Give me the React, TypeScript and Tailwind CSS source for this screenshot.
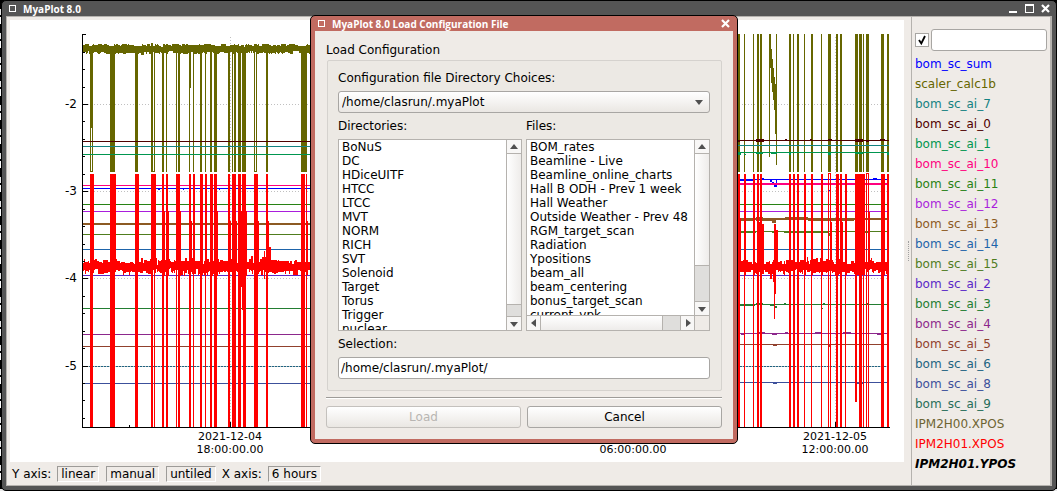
import React from "react";

const legend: [string, string][] = [
  ["bom_sc_sum", "text-[#0000ff]"],
  ["scaler_calc1b", "text-[#666600]"],
  ["bom_sc_ai_7", "text-[#148282]"],
  ["bom_sc_ai_0", "text-[#500000]"],
  ["bom_sc_ai_1", "text-[#009650]"],
  ["bom_sc_ai_10", "text-[#ff007f]"],
  ["bom_sc_ai_11", "text-[#288214]"],
  ["bom_sc_ai_12", "text-[#aa1edc]"],
  ["bom_sc_ai_13", "text-[#8c5a23]"],
  ["bom_sc_ai_14", "text-[#1e64aa]"],
  ["bom_sc_ai_15", "text-[#507d1e]"],
  ["bom_sc_ai_2", "text-[#5a28c8]"],
  ["bom_sc_ai_3", "text-[#237d32]"],
  ["bom_sc_ai_4", "text-[#8c288c]"],
  ["bom_sc_ai_5", "text-[#91412d]"],
  ["bom_sc_ai_6", "text-[#1e6482]"],
  ["bom_sc_ai_8", "text-[#3c509b]"],
  ["bom_sc_ai_9", "text-[#286e5a]"],
  ["IPM2H00.XPOS", "text-[#6e6432]"],
  ["IPM2H01.XPOS", "text-[#ff0000]"],
];

const directories = ["BoNuS", "DC", "HDiceUITF", "HTCC", "LTCC", "MVT", "NORM", "RICH", "SVT", "Solenoid", "Target", "Torus", "Trigger", "nuclear"];
const files = ["BOM_rates", "Beamline - Live", "Beamline_online_charts", "Hall B ODH - Prev 1 week", "Hall Weather", "Outside Weather - Prev 48", "RGM_target_scan", "Radiation", "Ypositions", "beam_all", "beam_centering", "bonus_target_scan", "current_vpk"];

// Each bar is [x, y, width, height] in chart units.
type Bar = [number, number, number, number];

const span = (pairs: [number, number][], y: number, bottom: number): Bar[] =>
  pairs.map(([x, w]) => [x, y, w, bottom - y]);

const toPath = (bars: Bar[]) => bars.map(([x, y, w, h]) => `M${x} ${y}h${w}v${h}h${-w}z`).join("");

function noise(from: number, to: number, top: number, bottom: number, jitter: number, seed: number): Bar[] {
  let s = seed;
  const next = () => {
    s = (s * 1103515245 + 12345) % 2147483648;
    return s / 2147483648;
  };
  const out: Bar[] = [];
  let a = 0;
  let b = 0;
  for (let x = from; x < to; x++) {
    if (next() > 0.45) a = Math.round((next() + next() - 1) * jitter);
    if (next() > 0.3) b = Math.round((next() + next() - 1) * jitter);
    out.push([x, top + a, 1, bottom + b - top - a]);
  }
  return out;
}

const oliveBars: Bar[] = [
  ...noise(83, 312, 45, 53, 2, 7),
  [90, 50, 3, 78],
  ...span([[90, 1], [92, 1], [110, 5], [135, 3], [151, 2], [154, 1], [162, 2], [166, 1], [176, 1], [178, 2], [189, 1], [193, 1], [200, 2], [205, 1], [210, 2], [214, 3], [228, 2], [232, 1], [234, 2], [238, 3], [242, 4], [254, 1], [256, 1], [266, 2], [301, 6]], 50, 172),
  [190, 50, 1, 38],
  [90, 171, 3, 1],
  [151, 171, 4, 1],
  [254, 171, 3, 1],
  ...span([[738, 2], [744, 1], [753, 1], [757, 2], [760, 2], [789, 2], [793, 1], [797, 2], [804, 1], [811, 2], [821, 1], [828, 3], [836, 2], [840, 2], [855, 3], [859, 3], [863, 1], [866, 3], [881, 3], [887, 2]], 34, 172),
  [769, 34, 1, 123],
  [770, 34, 1, 34],
  [771, 49, 1, 34],
  [772, 59, 1, 33],
  [773, 68, 1, 32],
  [774, 77, 1, 33],
  [775, 84, 1, 50],
  [776, 34, 1, 131],
];

const redBars: Bar[] = [
  ...noise(83, 312, 261, 272, 4, 19),
  ...noise(738, 889, 261, 272, 4, 31),
  ...span([[90, 3], [110, 5], [135, 3], [151, 2], [154, 1], [162, 2], [166, 2], [176, 1], [178, 2], [189, 2], [193, 1], [200, 2], [205, 1], [210, 2], [214, 3], [228, 2], [232, 4], [238, 3], [243, 3], [254, 4], [266, 2], [301, 4], [306, 1]], 174, 427),
  ...span([[90, 4], [110, 6], [135, 4], [152, 4], [176, 4], [193, 2], [200, 3], [205, 2], [210, 3], [242, 4]], 174, 270),
  ...span([[162, 3], [166, 3], [178, 3], [210, 3], [215, 3], [238, 9]], 211, 276),
  ...span([[190, 2], [229, 2], [234, 3], [255, 4], [267, 2], [306, 2]], 221, 270),
  [241, 260, 2, 27],
  [242, 270, 2, 40],
  [269, 247, 2, 20],
  [264, 251, 1, 28],
  [251, 256, 2, 10],
  [262, 257, 4, 10],
  ...span([[738, 2], [744, 1], [753, 1], [757, 2], [760, 2], [789, 2], [793, 2], [797, 2], [804, 1], [811, 1], [821, 1], [828, 1], [830, 1], [836, 2], [840, 2], [859, 3], [863, 1], [866, 1], [868, 1], [881, 3], [887, 1], [888, 1]], 174, 427),
  ...span([[744, 2], [753, 2], [793, 2], [804, 2], [811, 2], [821, 2], [836, 3], [845, 2], [855, 7], [862, 3], [881, 4], [887, 2]], 174, 275),
  [845, 174, 1, 253],
  [828, 173, 3, 1],
  [866, 173, 3, 1],
  [855, 174, 2, 228],
  [738, 218, 3, 50],
  [758, 222, 4, 48],
  [760, 224, 4, 46],
  [774, 224, 2, 70],
  [775, 230, 3, 40],
  [774, 270, 1, 49],
  [770, 265, 2, 14],
  [773, 265, 1, 17],
  [840, 222, 3, 48],
  [831, 222, 1, 48],
  [861, 210, 4, 58],
  [868, 212, 2, 56],
];

// [colour, y on the left side, y on the right side, thickness]
const traces: [string, number, number, number][] = [
  ["#500000", 141, 140, 1],
  ["#148282", 146, 145, 1],
  ["#009650", 154, 152, 1],
  ["#ff007f", 185, 183, 1],
  ["#0000ff", 188, 179, 1],
  ["#288214", 204, 204, 1],
  ["#aa1edc", 211, 211, 1],
  ["#8c5a23", 223, 218, 2],
  ["#507d1e", 234, 231, 1],
  ["#1e64aa", 249, 249, 1],
  ["#5a28c8", 275, 275, 1],
  ["#237d32", 308, 304, 1],
  ["#8c288c", 334, 333, 1],
  ["#91412d", 346, 344, 1],
  ["#1e6482", 366, 366, 1],
  ["#3c509b", 383, 382, 1],
];

const detail: [string, Bar[]][] = [
  ["#500000", [[738, 141, 2, 1], [756, 139, 8, 3], [785, 139, 2, 1], [810, 139, 2, 1], [828, 139, 4, 1], [855, 139, 8, 3], [866, 141, 3, 1], [880, 139, 5, 2]]],
  ["#009650", [[738, 153, 3, 2], [744, 154, 2, 1], [756, 152, 7, 2], [771, 153, 6, 1], [789, 153, 2, 2], [828, 153, 3, 2], [855, 153, 8, 1], [887, 153, 2, 2]]],
  ["#0000ff", [[740, 180, 14, 1], [760, 178, 4, 1], [770, 180, 2, 2], [772, 182, 2, 2], [774, 184, 3, 3], [776, 180, 1, 6], [873, 178, 4, 1], [152, 189, 3, 1], [158, 189, 2, 1], [183, 189, 1, 1], [219, 189, 1, 1], [829, 190, 1, 1]]],
  ["#ff007f", [[738, 183, 151, 2]]],
  ["#8c5a23", [[741, 218, 14, 3], [756, 217, 7, 4], [763, 219, 13, 2], [772, 220, 4, 3], [785, 217, 23, 3], [808, 218, 46, 3], [855, 217, 10, 4], [876, 219, 10, 1]]],
  ["#507d1e", [[740, 232, 16, 1], [772, 232, 4, 1], [784, 232, 44, 1], [855, 232, 14, 1], [829, 233, 2, 3]]],
  ["#237d32", [[740, 304, 15, 2], [756, 303, 7, 1], [770, 305, 4, 1], [774, 306, 3, 2], [784, 303, 2, 1], [823, 303, 2, 1], [866, 303, 2, 1], [793, 308, 2, 1], [821, 308, 2, 1]]],
  ["#8c288c", [[741, 334, 4, 1], [759, 332, 6, 1], [772, 334, 5, 1], [785, 332, 3, 1], [815, 332, 6, 1], [843, 332, 8, 1], [877, 333, 5, 2]]],
  ["#3c509b", [[773, 383, 4, 1], [793, 383, 2, 1], [855, 383, 8, 1]]],
  ["#91412d", [[773, 345, 4, 1], [828, 345, 2, 2]]],
];

const minorTicks = [52, 69, 87, 121, 139, 156, 174, 209, 226, 244, 261, 296, 313, 331, 348, 383, 400, 418];

function Chart() {
  return (
    <svg viewBox="10 20 894 442" className="block w-full bg-white" shapeRendering="crispEdges" role="img" aria-label="Signal history">
      <path d="M88 104.5H889M88 191.5H889M88 278.5H889M230.5 37V427M632.5 37V427M835.5 37V427" stroke="#c0c0c0" strokeDasharray="1 2" fill="none" />
      <path d={toPath(oliveBars)} fill="#666600" />
      {traces.map(([c, l, r, h]) => (
        <path key={c} fill={c} d={toPath([[83, l, 229, h], [737, r, 152, h]])} />
      ))}
      {detail.map(([c, bars]) => (
        <path key={c} fill={c} d={toPath(bars)} />
      ))}
      <path d="M88 366.5H889" stroke="#c0c0c0" strokeDasharray="1 2" fill="none" />
      <path d={toPath(redBars)} fill="#ff0000" />
      <path d={toPath([[82, 34, 1, 394], [82, 34, 4, 1], [82, 427, 808, 1], [129, 425, 1, 2], [230, 422, 1, 5], [835, 422, 1, 5]])} />
      <path d={toPath([104, 191, 278, 366].map((y): Bar => [83, y, 5, 1]))} />
      <path d={toPath(minorTicks.map((y): Bar => [83, y, 2, 1]))} />
      <g className="font-[DejaVu_Sans,sans-serif] text-[12px]" textAnchor="end">
        <text x="77" y="108">-2</text>
        <text x="77" y="195">-3</text>
        <text x="77" y="282">-4</text>
        <text x="77" y="370">-5</text>
      </g>
      <g className="font-[DejaVu_Sans,sans-serif] text-[11px]" textAnchor="middle">
        <text x="230" y="440">2021-12-04</text>
        <text x="230" y="453">18:00:00.00</text>
        <text x="633" y="453">06:00:00.00</text>
        <text x="835" y="440">2021-12-05</text>
        <text x="835" y="453">12:00:00.00</text>
      </g>
    </svg>
  );
}

const arrows = {
  up: "M3 9h8L7 4z",
  down: "M3 5h8L7 10z",
  left: "M9 3v8L4 7z",
  right: "M5 3v8l5-4z",
};

function Arrow({ dir }: { dir: keyof typeof arrows }) {
  return (
    <svg viewBox="0 0 14 14" className="block size-[14px]" aria-hidden="true">
      <path d={arrows[dir]} fill="#505050" />
    </svg>
  );
}

function VerticalBar({ thumb }: { thumb: string }) {
  return (
    <div className="flex w-[15px] shrink-0 flex-col border-l border-[#b5b2ae] bg-[#dfdedc]">
      <button type="button" aria-label="Scroll up" className="h-[14px] border-b border-[#b5b2ae] bg-[#f8f7f6]"><Arrow dir="up" /></button>
      <div className={`${thumb} border-b border-[#b5b2ae] bg-linear-to-r from-white to-[#eeecea]`} />
      <div className="flex-1" />
      <button type="button" aria-label="Scroll down" className="h-[14px] border-t border-[#b5b2ae] bg-[#f8f7f6]"><Arrow dir="down" /></button>
    </div>
  );
}

function List({ id, items }: { id: string; items: string[] }) {
  return (
    <select id={id} size={13} className="min-h-0 min-w-0 flex-1 appearance-none overflow-hidden bg-white p-0 text-[12px] leading-[14px] outline-none [scrollbar-width:none]">
      {items.map((t) => (
        <option key={t} className="h-[14px] min-h-0 overflow-hidden p-0 pl-[3px] leading-[14px] whitespace-nowrap">{t}</option>
      ))}
    </select>
  );
}

function Dialog() {
  const button = "h-[22px] flex-1 rounded-[3px] border bg-linear-to-b from-white to-[#eae7e3]";
  return (
    <div role="dialog" aria-labelledby="dialog-title" className="absolute top-[15px] left-[310px] w-[428px] rounded-[5px] border border-black bg-[#c16b61] px-1 pb-1">
      <div className="flex h-[15px] items-center gap-[7px] pr-[3px] pl-[3px] text-white">
        <span className="size-[7px] border border-white" />
        <h2 id="dialog-title" className="flex-1 font-['Open_Sans',sans-serif] text-[10px] leading-[14px] font-bold">MyaPlot 8.0 Load Configuration File</h2>
        <button type="button" aria-label="Close dialog"><CloseIcon /></button>
      </div>
      <div className="flex flex-col bg-[#efebe7] px-[11px] pt-[11px] pb-[11px] text-[12px] leading-4">
        <h3>Load Configuration</h3>
        <div className="mt-[2px] ml-px flex flex-col rounded-[2px] border border-[#d5d2ce] bg-[#ece9e4] pt-[9px] pr-[11px] pb-[11px] pl-[10px]">
          <label htmlFor="directory">Configuration file Directory Choices:</label>
          <div className="relative mt-[5px] flex">
            <select id="directory" className="h-[22px] flex-1 appearance-none rounded-[3px] border border-[#a8a6a3] bg-linear-to-b from-white to-[#eae7e3] pl-[3px]">
              <option>/home/clasrun/.myaPlot</option>
            </select>
            <span className="pointer-events-none absolute top-1 right-1"><Arrow dir="down" /></span>
          </div>
          <div className="mt-[5px] grid grid-cols-2 gap-x-1">
            <label htmlFor="directories">Directories:</label>
            <label htmlFor="files">Files:</label>
            <div className="mt-[5px] flex h-[192px] border border-[#b5b2ae]">
              <List id="directories" items={directories} />
              <VerticalBar thumb="h-[151px]" />
            </div>
            <div className="mt-[5px] flex h-[192px] flex-col border border-[#b5b2ae]">
              <div className="flex min-h-0 flex-1">
                <List id="files" items={files} />
                <VerticalBar thumb="h-[112px]" />
              </div>
              <div className="flex h-[15px] border-t border-[#b5b2ae] bg-[#dfdedc]">
                <button type="button" aria-label="Scroll left" className="w-[14px] border-r border-[#b5b2ae] bg-[#f8f7f6]"><Arrow dir="left" /></button>
                <div className="w-[122px] border-r border-[#b5b2ae] bg-linear-to-b from-white to-[#eeecea]" />
                <div className="flex-1" />
                <button type="button" aria-label="Scroll right" className="w-[14px] border-l border-[#b5b2ae] bg-[#f8f7f6]"><Arrow dir="right" /></button>
                <div className="w-[15px] border-l border-[#b5b2ae] bg-[#efebe7]" />
              </div>
            </div>
          </div>
          <label htmlFor="selection" className="mt-[5px]">Selection:</label>
          <input id="selection" defaultValue="/home/clasrun/.myaPlot/" className="mt-[5px] h-[22px] rounded-[3px] border border-[#a8a6a3] bg-white px-[2px]" />
        </div>
        <hr className="mt-[6px] h-[2px] border-t border-b border-t-[#9d9b98] border-b-white" />
        <div className="mt-[7px] flex gap-[6px]">
          <button type="button" disabled className={`${button} border-[#c4c1bd] text-[#b8b5b2]`}>Load</button>
          <button type="button" className={`${button} border-[#a8a6a3]`}>Cancel</button>
        </div>
      </div>
    </div>
  );
}

function CloseIcon() {
  return (
    <svg viewBox="0 0 9 9" className="block size-[9px]" aria-hidden="true">
      <path d="M1 1l7 7M8 1l-7 7" stroke="#fff" strokeWidth="2.2" />
    </svg>
  );
}

export default function App() {
  const field = "h-4 border border-t-[#9d9b98] border-r-white border-b-white border-l-[#9d9b98] px-[3px] leading-[14px]";
  return (
    <div className="relative flex min-h-screen bg-[repeating-linear-gradient(#000_0_9px,#e8e8e8_9px_15px,#000_15px_17px,#fff_17px_24px)] pl-px font-['DejaVu_Sans',sans-serif] text-[12px] text-black">
      <div className="flex flex-1 flex-col rounded-[5px] border border-black bg-[#555555] px-1 pb-1">
        <header className="flex h-[15px] items-center gap-[7px] pr-[2px] pl-[3px] text-white">
          <span className="size-[7px] border border-white" />
          <h1 className="flex-1 font-['Open_Sans',sans-serif] text-[10px] leading-[14px] font-bold">MyaPlot 8.0</h1>
          <div className="flex items-center gap-[7px]">
            <button type="button" aria-label="Minimize" className="flex size-[9px] items-end"><span className="h-[2px] w-2 bg-white" /></button>
            <button type="button" aria-label="Maximize" className="size-[9px] border border-t-2 border-white" />
            <button type="button" aria-label="Close"><CloseIcon /></button>
          </div>
        </header>
        <div className="flex flex-1 border border-r-2 border-[#b5b2ae] bg-[#efebe7]">
          <main className="flex min-w-0 flex-1 flex-col pt-[3px] pl-[3px]">
            <Chart />
            <div className="flex h-[23px] items-center pl-[2px]">
              <span className="mr-[6px]">Y axis:</span>
              <button type="button" className={`${field} mr-[7px]`}>linear</button>
              <button type="button" className={`${field} mr-[7px]`}>manual</button>
              <button type="button" className={`${field} mr-[6px]`}>untiled</button>
              <span className="mr-[6px]">X axis:</span>
              <button type="button" className={field}>6 hours</button>
            </div>
          </main>
          <div className="flex w-[7px] items-center justify-center pl-[2px]">
            <span className="h-5 border-l border-dotted border-[#a0a0a0]" />
          </div>
          <aside className="w-[139px] border-l border-[#b5b2ae] px-[3px] pt-3">
            <div className="flex items-center gap-[2px]">
              <label className="relative flex">
                <input type="checkbox" defaultChecked aria-label="Show all" className="peer size-[14px] appearance-none border border-[#a8a6a3] bg-white" />
                <svg viewBox="0 0 14 14" className="pointer-events-none absolute inset-0 hidden size-[14px] peer-checked:block" aria-hidden="true">
                  <path d="M4 7l2.3 3.5L10 3" fill="none" stroke="#000" strokeWidth="1.8" />
                </svg>
              </label>
              <input aria-label="Filter signals" className="h-[22px] min-w-0 flex-1 rounded-[3px] border border-[#a8a6a3] bg-white px-1" />
            </div>
            <ul className="mt-[3px] leading-5">
              {legend.map(([name, color]) => (
                <li key={name} className={color}>{name}</li>
              ))}
              <li className="font-bold italic">IPM2H01.YPOS</li>
            </ul>
          </aside>
        </div>
      </div>
      <Dialog />
    </div>
  );
}
